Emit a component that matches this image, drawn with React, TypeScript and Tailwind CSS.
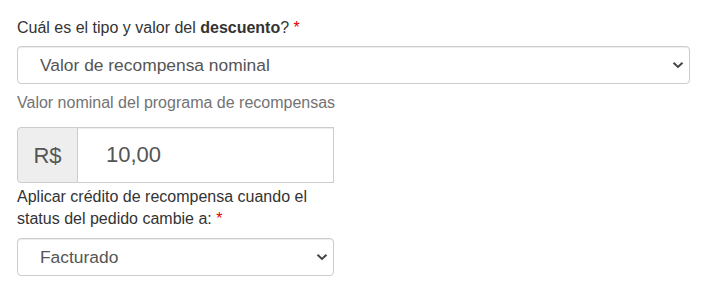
import { ChangeEvent, useState } from 'react'

function Chevron() {
  return (
    <svg width="12" height="8" viewBox="0 0 12 8" className="pointer-events-none absolute top-1/2 right-[6px] -translate-y-1/2">
      <path d="M1.5 1.8 L6 6 L10.5 1.8" fill="none" stroke="#444" strokeWidth="2" />
    </svg>
  )
}

function Req() {
  return <span className="text-[#e00000]"> *</span>
}

export default function App() {
  const [tipo, setTipo] = useState('nominal')
  const [valor, setValor] = useState('10,00')
  const [status, setStatus] = useState('facturado')

  return (
    <div className="min-h-[293px] bg-white pl-[17px] pt-[17px] text-[16px] leading-[21px] text-[#333]" style={{ fontFamily: '"Liberation Sans", Arial, sans-serif' }}>
      <label className="block">
        Cuál es el tipo y valor del <b className="font-bold">descuento</b>?<Req />
      </label>
      <div className="relative mt-[8px] w-[673px]">
        <select
          value={tipo}
          onChange={(e: ChangeEvent<HTMLSelectElement>) => setTipo(e.target.value)}
          className="block h-[38px] w-full appearance-none rounded-[4px] border border-[#ccc] bg-white pl-[22px] text-[17.4px] text-[#555] shadow-[inset_0_1px_1px_rgba(0,0,0,0.075)] outline-none"
        >
          <option value="nominal">Valor de recompensa nominal</option>
          <option value="porcentaje">Porcentaje de recompensa</option>
        </select>
        <Chevron />
      </div>
      <p className="mt-[8px] text-[#737373]">Valor nominal del programa de recompensas</p>

      {/* R$ input group */}
      <div className="mt-[14px] flex h-[56px] w-[317px]">
        <div className="flex w-[61px] shrink-0 items-center justify-center rounded-l-[4px] border border-[#ccc] bg-[#eee] text-[22px] text-[#555]">
          R$
        </div>
        <input
          value={valor}
          onChange={(e: ChangeEvent<HTMLInputElement>) => setValor(e.target.value)}
          className="min-w-0 flex-1 border border-l-0 border-[#ccc] bg-white pl-[28px] text-[22px] text-[#555] shadow-[inset_0_1px_1px_rgba(0,0,0,0.075)] outline-none"
        />
      </div>

      <label className="mt-[3px] block leading-[22px]">
        Aplicar crédito de recompensa cuando el<br />
        status del pedido cambie a:<Req />
      </label>
      <div className="relative mt-[8px] w-[317px]">
        <select
          value={status}
          onChange={(e: ChangeEvent<HTMLSelectElement>) => setStatus(e.target.value)}
          className="block h-[38px] w-full appearance-none rounded-[4px] border border-[#ccc] bg-white pl-[22px] text-[17.4px] text-[#555] shadow-[inset_0_1px_1px_rgba(0,0,0,0.075)] outline-none"
        >
          <option value="facturado">Facturado</option>
          <option value="enviado">Enviado</option>
          <option value="entregado">Entregado</option>
        </select>
        <Chevron />
      </div>
    </div>
  )
}
